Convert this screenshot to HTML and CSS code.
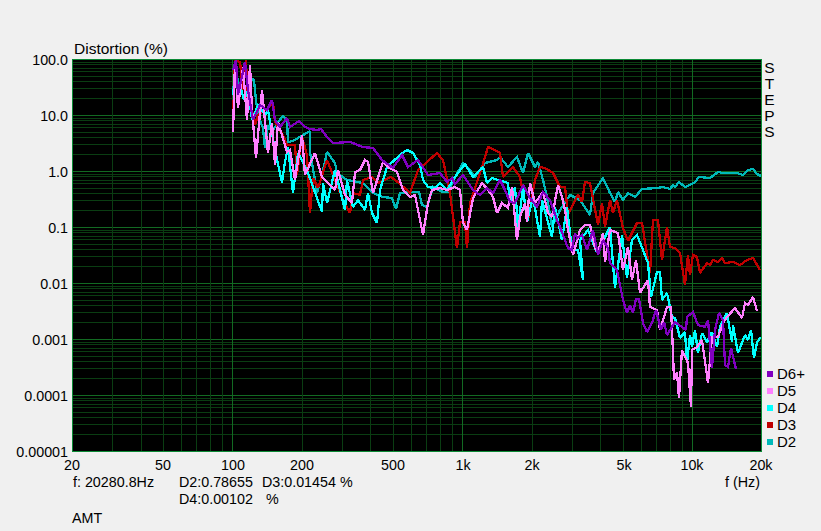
FILE: index.html
```html
<!DOCTYPE html>
<html lang="en">
<head>
<meta charset="utf-8">
<title>Distortion (%)</title>
<link rel="stylesheet" href="styles.css">
</head>
<body>
<main class="page">
  <div class="title">Distortion (%)</div>
  <div class="chart-row">
    <div class="y-axis">
      <span>100.0</span><span>10.0</span><span>1.0</span><span>0.1</span><span>0.01</span><span>0.001</span><span>0.0001</span><span>0.00001</span>
    </div>
    <svg class="plot" viewBox="72 59 690 393" width="690" height="393" aria-label="Distortion plot">
      <defs>
        <g id="hdec">
          <path class="minor" d="M72 62.5H762M72 64.5H762M72 68.5H762M72 71.5H762M72 76.5H762M72 81.5H762M72 88.5H762M72 98.5H762"/>
          <path class="major" d="M72 115.5H762"/>
        </g>
        <g id="vdec">
          <path class="minor" d="M302.5 59V452M342.5 59V452M370.5 59V452M393.5 59V452M411.5 59V452M426.5 59V452M440.5 59V452M452.5 59V452"/>
          <path class="major" d="M462.5 59V452"/>
        </g>
      </defs>
      <use href="#hdec"/><use href="#hdec" y="56"/><use href="#hdec" y="112"/><use href="#hdec" y="168"/><use href="#hdec" y="224"/><use href="#hdec" y="280"/><use href="#hdec" y="336"/>
      <path class="minor" d="M112.5 59V452M141.5 59V452M163.5 59V452M181.5 59V452M196.5 59V452M210.5 59V452M222.5 59V452"/>
      <path class="major" d="M232.5 59V452"/>
      <use href="#vdec"/><use href="#vdec" x="230"/>
      <polyline class="curve d2" points="233,90 236,70 240,95 245,75 250,78 254,80 256,100 258,115 263,128 265,148 268,125 272,132 278,122 283,116 287,120 288,142 293,141 310,131 310,152 315,180 317,193 322,175 327,152 335,163 337,173 347,180 363,183 373,193 383,197 392,198 396,209 400,193 410,192 419,192 422,205 427,207 433,187 443,192 448,192 453,181 463,163 470,170 475,177 482,167 485,163 497,160 500,157 508,167 517,157 523,173 528,153 535,167 538,162 543,180 547,197 552,227 560,210 570,195 580,200 590,215 593,193 603,178 610,193 615,202 618,192 623,200 628,193 635,197 642,189 657,188 663,187 670,189 673,185 675,187 679,182 685,187 690,185 695,182 699,177 710,178 718,172 723,173 737,173 743,175 748,170 753,169 757,174 761,176"/>
      <polyline class="curve d3" points="233,120 235,60 240,62 243,90 246,60 248,108 252,110 255,125 258,115 268,108 273,102 275,122 283,135 287,145 295,145 297,175 302,137 307,155 310,213 313,178 318,188 327,160 335,180 343,200 350,213 353,193 360,195 363,180 372,177 378,183 391,177 399,183 410,193 418,170 437,153 443,160 450,193 457,248 460,222 465,222 467,248 470,203 482,167 488,147 495,150 500,153 503,177 513,167 520,177 528,220 535,180 540,167 545,168 553,173 560,187 565,187 568,214 578,195 582,202 585,182 590,183 598,225 602,203 605,227 610,200 613,213 617,200 623,228 628,241 637,223 642,223 650,273 653,220 658,220 662,260 667,227 670,247 675,248 680,253 685,285 688,255 690,275 693,255 697,257 700,273 707,263 710,265 713,260 718,262 722,258 725,263 733,262 740,265 747,260 753,258 760,270"/>
      <polyline class="curve d4" points="233,95 236,70 238,100 240,85 244,100 248,90 252,120 258,105 265,115 268,110 275,150 282,183 285,162 288,147 293,193 298,153 307,170 322,212 323,183 327,203 335,170 345,210 347,180 353,207 358,200 365,210 368,193 372,213 377,223 380,190 387,167 400,155 407,150 413,153 420,165 423,180 428,187 435,188 440,183 447,190 455,177 465,164 473,177 483,167 487,183 492,178 508,183 510,203 515,187 518,227 523,187 527,222 533,197 540,237 542,200 552,237 555,207 562,240 567,207 572,250 578,250 583,280 580,240 588,230 597,253 605,237 610,227 615,288 622,235 627,278 632,240 637,235 643,250 648,263 651,297 657,272 660,272 662,300 667,293 672,317 675,318 680,338 685,332 687,363 690,335 692,347 695,330 698,353 702,333 707,342 712,332 717,347 720,327 727,313 732,342 733,325 738,353 745,335 748,340 751,330 754,358 757,342 761,337"/>
      <polyline class="curve d5" points="233,132 235,63 238,108 243,67 247,120 250,65 252,110 256,158 262,90 268,153 272,123 275,165 278,122 287,152 290,150 295,180 302,135 305,175 315,153 322,177 328,183 335,190 338,170 345,195 352,203 355,172 360,170 365,160 368,162 373,193 383,162 388,167 397,172 403,190 410,197 415,195 418,210 423,235 428,203 432,190 440,188 447,190 455,187 460,190 463,223 467,230 473,198 482,183 488,190 493,197 497,213 502,203 508,208 512,187 517,240 520,217 525,203 527,222 530,183 535,203 543,192 548,213 552,217 558,185 562,197 565,210 568,230 573,255 580,230 585,225 590,225 595,247 598,253 603,233 605,262 610,230 618,233 623,270 628,247 632,280 636,260 640,293 648,280 650,307 657,310 660,330 667,307 671,307 673,353 674,380 677,372 679,398 682,350 688,363 691,407 692,350 697,347 702,340 708,383 712,337 718,337 723,323 727,317 735,308 742,318 745,303 748,305 753,297 757,311"/>
      <polyline class="curve d6" points="233,70 236,60 238,95 245,62 248,90 253,120 260,105 267,110 272,100 275,120 280,127 287,118 290,127 299,121 305,127 310,129 317,130 321,129 327,137 333,143 350,142 363,147 373,148 382,160 393,168 402,155 408,167 418,160 428,175 440,173 447,182 452,178 455,184 463,175 473,190 480,195 487,188 493,193 500,180 505,190 510,202 515,203 523,185 530,198 537,207 543,192 550,200 557,220 560,227 568,248 572,250 575,233 577,238 582,235 587,250 593,230 598,255 603,240 608,248 610,263 617,270 623,300 627,313 630,305 633,313 636,299 639,299 643,323 647,332 652,323 656,310 661,330 664,322 667,335 675,322 686,330 687,317 693,312 698,325 705,327 708,320 712,368 715,330 719,313 723,320 725,365 728,367 731,348 736,369"/>
      <rect class="frame" x="72.5" y="59.5" width="689" height="392"/>
    </svg>
    <aside class="side">
      <div class="steps"><span>S</span><span>T</span><span>E</span><span>P</span><span>S</span></div>
      <ul class="legend">
        <li><i class="swatch s6"></i>D6+</li>
        <li><i class="swatch s5"></i>D5</li>
        <li><i class="swatch s4"></i>D4</li>
        <li><i class="swatch s3"></i>D3</li>
        <li><i class="swatch s2"></i>D2</li>
      </ul>
    </aside>
  </div>
  <div class="x-axis">
    <span style="left:72px">20</span>
    <span style="left:163px">50</span>
    <span style="left:233px">100</span>
    <span style="left:302px">200</span>
    <span style="left:393px">500</span>
    <span style="left:463px">1k</span>
    <span style="left:532px">2k</span>
    <span style="left:624px">5k</span>
    <span style="left:692px">10k</span>
    <span style="left:761px">20k</span>
  </div>
  <div class="readout">
    <span>f: 20280.8Hz</span><span>D2:0.78655</span><span>D3:0.01454 %</span><span>f (Hz)</span>
    <span></span><span>D4:0.00102</span><span class="unit">%</span><span></span>
  </div>
  <div class="name">AMT</div>
</main>
</body>
</html>
```
FILE: styles.css
```css
* { box-sizing: border-box; }
html, body { margin: 0; padding: 0; }
body {
  width: 821px;
  height: 531px;
  overflow: hidden;
  background: #f0f0f0;
  color: #000;
  font-family: "Liberation Sans", Arial, sans-serif;
  font-size: 14.3px;
  line-height: 17px;
}
.title {
  height: 59px;
  padding: 0 0 2px 74px;
  display: flex;
  align-items: flex-end;
  font-size: 15.5px;
}
.chart-row { display: flex; height: 393px; }
.y-axis {
  width: 72px;
  margin-top: -27.5px;
  padding-right: 4px;
  display: flex;
  flex-direction: column;
  align-items: flex-end;
  flex: none;
}
.y-axis span { height: 56px; flex: none; line-height: 56px; }
.plot { display: block; flex: none; background: #000; }
.minor, .major, .frame { fill: none; stroke-width: 1; shape-rendering: crispEdges; }
.minor { stroke: #0a3d12; }
.major { stroke: #126a22; }
.frame { stroke: #0b8a35; }
.curve { fill: none; stroke-width: 2.3; stroke-linejoin: miter; stroke-miterlimit: 2; shape-rendering: crispEdges; }
.d2 { stroke: #00b9b9; }
.d3 { stroke: #c00000; }
.d4 { stroke: #00ffff; }
.d5 { stroke: #ff80ff; }
.d6 { stroke: #8000c0; }
.side {
  flex: 1;
  display: flex;
  flex-direction: column;
  justify-content: space-between;
  padding: 1px 0 2px;
}
.steps {
  width: 15px;
  display: flex;
  flex-direction: column;
  align-items: center;
  font-size: 15.5px;
  line-height: 16px;
}
.legend { list-style: none; margin: 0; padding: 0 0 0 5px; font-size: 15px; }
.legend li { display: flex; align-items: center; gap: 4px; height: 17px; }
.swatch { width: 6px; height: 6px; flex: none; }
.s6 { background: #8000c0; }
.s5 { background: #ff80ff; }
.s4 { background: #00ffff; }
.s3 { background: #c00000; }
.s2 { background: #00b9b9; }
.x-axis { position: relative; height: 22px; }
.x-axis span { position: absolute; top: 5px; transform: translateX(-50%); }
.readout {
  display: grid;
  grid-template-columns: 106px 83px 463px auto;
  grid-auto-rows: 17px;
  padding-left: 73px;
}
.unit { padding-left: 4px; }
.name { padding: 2px 0 0 72px; }
```
